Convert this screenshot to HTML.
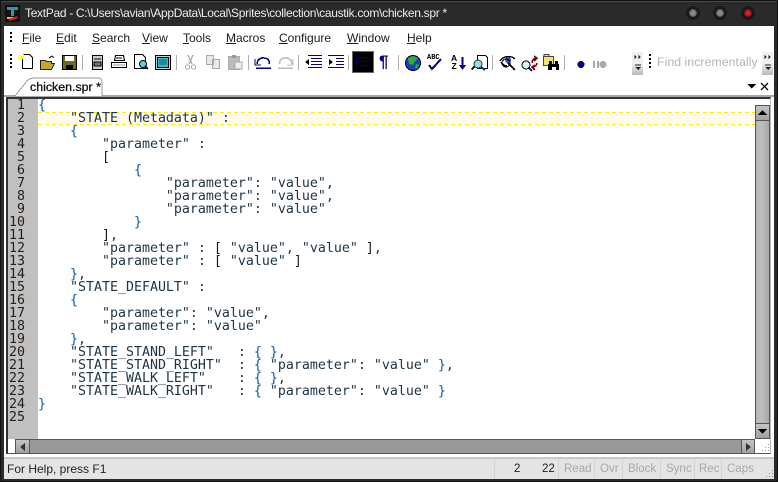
<!DOCTYPE html>
<html><head><meta charset="utf-8"><style>
*{box-sizing:border-box}
html,body{margin:0;padding:0;width:778px;height:482px;overflow:hidden;background:#2a2a2a}
.a{position:absolute}
#ui{position:absolute;left:0;top:0;width:778px;height:482px;font-family:"Liberation Sans",sans-serif}
.m{position:absolute;top:31px;font-size:12px;line-height:14px;color:#1a1a1a;white-space:pre}
.m u{text-decoration:underline}
.ln{position:absolute;left:8px;width:17px;text-align:right;font:13.3px/13px "DejaVu Sans Mono",monospace;color:#2a2018}
pre{position:absolute;margin:0;left:38px;top:99px;font:13.29px/13px "DejaVu Sans Mono",monospace;color:#1c3444;white-space:pre}
pre b{font-weight:normal;color:#0a5aa8}
pre i{font-style:normal;color:#1a1a1a}
.s{position:absolute;top:462px;font-size:11.5px;line-height:14px;color:#a8a8a8;white-space:pre}
.sep{position:absolute;width:1px;top:459px;height:20px;background:#d4d4d4}
.tb{position:absolute;width:1px;top:55px;height:15px;background:#b0b0b0}
.grip{position:absolute;width:2px;height:2px;background:#000}
svg{position:absolute;overflow:visible;shape-rendering:crispEdges}
.btn{position:absolute;background:linear-gradient(#c4c4c4,#a0a0a0);border:1px solid #555}
.dash{position:absolute;left:38px;width:717px;height:1px;background:repeating-linear-gradient(90deg,#ffee00 0 4px,#fff 4px 7px)}
</style></head><body><div id="ui">
<div class="a" style="left:0;top:0;width:778px;height:482px;background:#2a2a2a;border:1px solid #111"></div>
<div class="a" style="left:1px;top:1px;width:776px;height:1px;background:#4a4a4a"></div>

<svg style="left:5px;top:5px" width="16" height="18"><rect x="0" y="0" width="15" height="17" fill="#111"/><path d="M2 2h11v3h-4v6H6V5H2z" fill="#1b9bc4"/><path d="M2 12h9v2H2z" fill="#e8c040"/><path d="M3 14l9-3 1 2-8 3z" fill="#d02020"/></svg>
<div class="a" style="left:25px;top:6px;font-size:12px;letter-spacing:-.31px;line-height:14px;color:#ececec;white-space:pre">TextPad - C:\Users\avian\AppData\Local\Sprites\collection\caustik.com\chicken.spr *</div>

<svg style="left:684px;top:5px" width="82" height="16" shape-rendering="geometricPrecision">
<defs><radialGradient id="g"><stop offset="0" stop-color="#999"/><stop offset=".7" stop-color="#777"/><stop offset="1" stop-color="#4a4a4a"/></radialGradient><radialGradient id="r"><stop offset="0" stop-color="#e83030"/><stop offset=".7" stop-color="#b01818"/><stop offset="1" stop-color="#601010"/></radialGradient></defs>
<circle cx="9" cy="8" r="7" fill="#1a1a1a"/><circle cx="9" cy="8" r="4" fill="url(#g)"/>
<circle cx="36" cy="8" r="7" fill="#1a1a1a"/><circle cx="36" cy="8" r="4" fill="url(#g)"/>
<circle cx="64" cy="8" r="7" fill="#1a1a1a"/><circle cx="64" cy="8" r="4" fill="url(#r)"/>
</svg>

<div class="a" style="left:4px;top:26px;width:770px;height:70px;background:#fff"></div>
<div class="a" style="left:4px;top:95px;width:770px;height:2px;background:#a8a8a8"></div>

<div class="grip" style="left:10px;top:32px"></div><div class="grip" style="left:10px;top:36px"></div><div class="grip" style="left:10px;top:40px"></div>
<div class="m" style="left:22px"><u>F</u>ile</div>
<div class="m" style="left:56px"><u>E</u>dit</div>
<div class="m" style="left:92px"><u>S</u>earch</div>
<div class="m" style="left:142px"><u>V</u>iew</div>
<div class="m" style="left:183px"><u>T</u>ools</div>
<div class="m" style="left:226px"><u>M</u>acros</div>
<div class="m" style="left:279px"><u>C</u>onfigure</div>
<div class="m" style="left:347px"><u>W</u>indow</div>
<div class="m" style="left:407px"><u>H</u>elp</div>

<div class="grip" style="left:10px;top:54px"></div><div class="grip" style="left:10px;top:58px"></div><div class="grip" style="left:10px;top:62px"></div><div class="grip" style="left:10px;top:66px"></div>

<!-- new -->
<svg style="left:18px;top:54px" width="16" height="16"><path d="M5.500.5h6l3 3v11h-10v-11" fill="#fff" stroke="#000"/><rect x="0" y="1" width="5" height="4" fill="#ffff40"/></svg>
<!-- open -->
<svg style="left:40px;top:55px" width="16" height="15"><path d="M.500 5.500h5l1 1h5v2h3l-3 6h-11z" fill="#c0a830" stroke="#222"/><path d="M9 3l3-2 2 2" fill="none" stroke="#222"/></svg>
<!-- save -->
<svg style="left:62px;top:55px" width="15" height="15"><rect x=".5" y=".5" width="14" height="14" fill="#6a6a20" stroke="#000"/><rect x="3" y="1" width="9" height="5" fill="#fff"/><rect x="4" y="10" width="7" height="5" fill="#000"/></svg>
<div class="tb" style="left:82px"></div>
<!-- manage -->
<svg style="left:91px;top:55px" width="13" height="15"><rect x="1.500" y=".5" width="10" height="14" fill="#ccc" stroke="#000"/><path d="M3 4h7M3 7h7v4H3z" fill="#777" stroke="#000"/></svg>
<!-- print -->
<svg style="left:111px;top:55px" width="16" height="15"><path d="M4.500.5h8l1 5h-10zM.500 7.500h15v5h-15z" fill="#fff" stroke="#000"/><rect x="2" y="9" width="12" height="2" fill="#ccc"/><path d="M5 3h6" stroke="#000"/></svg>
<!-- preview -->
<svg style="left:134px;top:54px" width="16" height="16"><path d="M.5.500h8l3 3v11h-11z" fill="#fff" stroke="#000"/><circle cx="9" cy="10" r="3.500" fill="#60d0e0" stroke="#000" shape-rendering="geometricPrecision"/><path d="M11 12l3 3" stroke="#000" stroke-width="2"/></svg>
<!-- doc props -->
<svg style="left:155px;top:55px" width="16" height="15"><rect x=".5" y=".5" width="15" height="14" fill="#ccc" stroke="#000"/><rect x="2" y="2" width="12" height="11" fill="#000"/><rect x="3" y="3" width="10" height="9" fill="#30c0c8"/><path d="M4 5h8M4 7h8M4 9h8" stroke="#0a5a70"/></svg>
<div class="tb" style="left:176px"></div>
<!-- cut -->
<svg style="left:185px;top:55px" width="11" height="15" shape-rendering="geometricPrecision"><path d="M3 0l4 9M8 0L4 9" stroke="#aaa" fill="none" stroke-width="1.300"/><circle cx="2.500" cy="12" r="2.200" fill="none" stroke="#aaa"/><circle cx="8.500" cy="12" r="2.200" fill="none" stroke="#aaa"/></svg>
<!-- copy -->
<svg style="left:206px;top:55px" width="15" height="14"><path d="M.5.500h7v9h-7zM6.500 4.500h7v9h-7z" fill="#e8e8e8" stroke="#aaa"/></svg>
<!-- paste -->
<svg style="left:228px;top:55px" width="15" height="15"><rect x=".5" y="1.500" width="11" height="13" fill="#bbb" stroke="#aaa"/><rect x="4" y="0" width="4" height="3" fill="#999"/><rect x="7" y="7" width="7" height="7" fill="#eee" stroke="#aaa"/></svg>
<div class="tb" style="left:248px"></div>
<!-- undo -->
<svg style="left:255px;top:55px" width="17" height="15" shape-rendering="geometricPrecision"><path d="M2 9a6 6 0 0 1 7-6c4 0 6 3 5 6" fill="none" stroke="#000080" stroke-width="1.500"/><path d="M0 4v6h6" fill="none" stroke="#000080"/><path d="M1 13h15" stroke="#000080" stroke-width="1.500"/></svg>
<!-- redo -->
<svg style="left:277px;top:55px" width="17" height="15" shape-rendering="geometricPrecision"><path d="M15 9a6 6 0 0 0-7-6c-4 0-6 3-5 6" fill="none" stroke="#bbb" stroke-width="1.500"/><path d="M16 4v6h-6" fill="none" stroke="#bbb"/><path d="M1 13h15" stroke="#bbb" stroke-width="1.500"/></svg>
<div class="tb" style="left:298px"></div>
<!-- indent -->
<svg style="left:305px;top:55px" width="17" height="14"><path d="M3 .5h14M6 3.500h11M6 6.500h11M6 9.500h11M3 12.500h14" stroke="#000080"/><path d="M0 7l4-3v6z" fill="#000"/></svg>
<svg style="left:328px;top:55px" width="16" height="14"><path d="M0 .5h16M8 3.500h8M8 6.500h8M8 9.500h8M0 12.500h16" stroke="#000080"/><path d="M5 7L1 4v6z" fill="#000"/></svg>
<div class="tb" style="left:348px"></div>
<!-- wrap toggled -->
<div class="a" style="left:352px;top:51px;width:22px;height:22px;background:#000;border:1px solid #666"></div>
<svg style="left:356px;top:56px" width="14" height="12"><path d="M2 1.500h10M1 5.500h4M7 5.500h6M2 9.500h10" stroke="#000080" stroke-width="1"/><path d="M.5 2v3M13.500 2v3M.5 6v3" stroke="#000080"/></svg>
<div class="a" style="left:379px;top:53px;font:bold 17px/18px 'Liberation Sans',sans-serif;color:#000080">¶</div>
<div class="tb" style="left:398px"></div>
<!-- globe -->
<svg style="left:405px;top:55px" width="16" height="16" shape-rendering="geometricPrecision"><circle cx="8" cy="8" r="7.500" fill="#1840c0" stroke="#103"/><path d="M3 3l5-2 5 2-3 3-2 4-4-1zM11 9l3 1-2 4-2-1z" fill="#30b030"/></svg>
<!-- spell -->
<svg style="left:427px;top:55px" width="15" height="15" shape-rendering="geometricPrecision"><path d="M2 10l3 4 9-10" fill="none" stroke="#000080" stroke-width="2"/></svg>
<div class="a" style="left:427px;top:54px;font:bold 7px/8px 'Liberation Mono',monospace;color:#000">ABC</div>
<!-- sort -->
<div class="a" style="left:451px;top:54px;font:bold 8.5px/8px 'Liberation Sans',sans-serif;color:#000;text-align:center">A<br>Z</div>
<svg style="left:459px;top:57px" width="7" height="13"><path d="M3.500 0v9" stroke="#000080" stroke-width="2"/><path d="M0 8h7l-3.500 5z" fill="#000080"/></svg>
<!-- find in files-like -->
<svg style="left:471px;top:55px" width="17" height="16"><path d="M6.500.5h8l2 2v11h-10z" fill="#fff" stroke="#000"/><circle cx="7" cy="9" r="4" fill="#90e0e8" stroke="#333" shape-rendering="geometricPrecision"/><path d="M.5 14.500l3-3" stroke="#000" stroke-width="2"/><path d="M10 12l4 3" stroke="#1030a0" stroke-width="2"/></svg>
<div class="tb" style="left:492px"></div>
<!-- eye -->
<svg style="left:499px;top:54px" width="18" height="18" shape-rendering="geometricPrecision"><path d="M1 7c3-5 11-6 15-2" fill="none" stroke="#000" stroke-width="1.400"/><circle cx="9" cy="6" r="3" fill="#3050c0"/><path d="M2 8c2 3 4 4 6 4M9 9l7 7" fill="none" stroke="#000" stroke-width="1.500"/><circle cx="7" cy="9" r="4" fill="none" stroke="#000"/></svg>
<!-- replace -->
<svg style="left:521px;top:56px" width="18" height="15" shape-rendering="geometricPrecision"><circle cx="5" cy="9" r="4" fill="#d8f4f8" stroke="#000"/><path d="M8 12l3 3" stroke="#000080" stroke-width="2"/><path d="M11 7c0-3 2-5 4-5M13 0l3 2-3 3M16 7c0 2-2 4-4 4M14 9l-3 2 3 3" fill="none" stroke="#800000" stroke-width="1.500"/></svg>
<!-- find files -->
<svg style="left:543px;top:54px" width="17" height="17"><rect x=".5" y="2.500" width="10" height="9" fill="#f0e860" stroke="#444"/><rect x="1" y=".5" width="5" height="2" fill="#f0e860" stroke="#444"/><path d="M5 10h11v6h-3v-3h-4v3H5z" fill="#000"/><rect x="6" y="7" width="3" height="4" fill="#000"/><rect x="12" y="7" width="3" height="4" fill="#000"/></svg>
<div class="tb" style="left:564px"></div>
<svg style="left:577px;top:60px" width="30" height="9" shape-rendering="geometricPrecision"><circle cx="4" cy="4.500" r="3.500" fill="#000080"/><path d="M16 1h2v7h-2zM20 1h2v7h-2z" fill="#aaa"/><circle cx="26" cy="4.500" r="3.500" fill="#aaa"/></svg>

<div class="a" style="left:632px;top:52px;width:11px;height:23px;background:linear-gradient(#f0f0f0 50%,#b8b8b8)"></div>
<svg style="left:634px;top:55px" width="8" height="17"><path d="M.5 0v4l2-2zM4.500 0v4l2-2z" fill="#222"/><path d="M1 10h6" stroke="#222"/><path d="M1 12h6l-3 3z" fill="#222"/></svg>
<div class="grip" style="left:649px;top:54px"></div><div class="grip" style="left:649px;top:58px"></div><div class="grip" style="left:649px;top:62px"></div><div class="grip" style="left:649px;top:66px"></div>
<div class="a" style="left:657px;top:55px;font-size:12.4px;line-height:14px;color:#b4b4b8;white-space:pre">Find incrementally</div>
<div class="a" style="left:762px;top:52px;width:11px;height:23px;background:linear-gradient(#f0f0f0 50%,#b8b8b8)"></div>
<svg style="left:764px;top:55px" width="8" height="17"><path d="M.5 0v4l2-2zM4.500 0v4l2-2z" fill="#222"/><path d="M1 10h6" stroke="#222"/><path d="M1 12h6l-3 3z" fill="#222"/></svg>

<!-- tab -->
<svg style="left:4px;top:66px" width="110" height="31" shape-rendering="geometricPrecision"><path d="M11 30L23 15Q26 12 30 12H94Q98 12 98 16V30" fill="#fff" stroke="#999"/></svg>
<div class="a" style="left:30px;top:80px;font-size:12.4px;line-height:14px;color:#111;white-space:pre;-webkit-text-stroke:.3px #111">chicken.spr *</div>
<svg style="left:747px;top:82px" width="24" height="10"><path d="M0 2h9L4.500 6.500z" fill="#000"/><path d="M14 1l7 7M21 1l-7 7" stroke="#000" stroke-width="1.300" shape-rendering="geometricPrecision"/></svg>

<!-- editor -->
<div class="a" style="left:4px;top:97px;width:770px;height:360px;background:#fff"></div>
<div class="a" style="left:6px;top:97px;width:765px;height:357px;border:2px solid #333;border-right:1px solid #bbb;border-bottom:1px solid #555;background:#fff"></div>
<div class="a" style="left:8px;top:99px;width:30px;height:340px;background:#c0c0c0"></div>
<div class="a" style="left:38px;top:112px;width:717px;height:13px;background:#fff9ee"></div>
<div class="dash" style="top:112px"></div>
<div class="dash" style="top:124px"></div>
<div class="ln" style="top:99px">1</div><div class="ln" style="top:112px">2</div><div class="ln" style="top:125px">3</div><div class="ln" style="top:138px">4</div><div class="ln" style="top:151px">5</div><div class="ln" style="top:164px">6</div><div class="ln" style="top:177px">7</div><div class="ln" style="top:190px">8</div><div class="ln" style="top:203px">9</div><div class="ln" style="top:216px">10</div><div class="ln" style="top:229px">11</div><div class="ln" style="top:242px">12</div><div class="ln" style="top:255px">13</div><div class="ln" style="top:268px">14</div><div class="ln" style="top:281px">15</div><div class="ln" style="top:294px">16</div><div class="ln" style="top:307px">17</div><div class="ln" style="top:320px">18</div><div class="ln" style="top:333px">19</div><div class="ln" style="top:346px">20</div><div class="ln" style="top:359px">21</div><div class="ln" style="top:372px">22</div><div class="ln" style="top:385px">23</div><div class="ln" style="top:398px">24</div><div class="ln" style="top:411px">25</div>
<pre><b>{</b>
    "STATE (Metadata)" :
    <b>{</b>
        "parameter" :
        <i>[</i>
            <b>{</b>
                "parameter": "value",
                "parameter": "value",
                "parameter": "value"
            <b>}</b>
        <i>]</i>,
        "parameter" : <i>[</i> "value", "value" <i>]</i>,
        "parameter" : <i>[</i> "value" <i>]</i>
    <b>}</b>,
    "STATE_DEFAULT" :
    <b>{</b>
        "parameter": "value",
        "parameter": "value"
    <b>}</b>,
    "STATE_STAND_LEFT"   : <b>{</b> <b>}</b>,
    "STATE_STAND_RIGHT"  : <b>{</b> "parameter": "value" <b>}</b>,
    "STATE_WALK_LEFT"    : <b>{</b> <b>}</b>,
    "STATE_WALK_RIGHT"   : <b>{</b> "parameter": "value" <b>}</b>
<b>}</b></pre>

<!-- vertical scrollbar -->
<div class="a" style="left:755px;top:105px;width:15px;height:333px;background:#999;border:1px solid #555"></div>
<div class="btn" style="left:755px;top:105px;width:15px;height:16px"></div>
<svg style="left:758px;top:110px" width="9" height="5"><path d="M0 5h9L4.500 0z" fill="#000"/></svg>
<div class="a" style="left:755px;top:120px;width:15px;height:304px;background:linear-gradient(90deg,#b4b4b4,#c0c0c0 40%,#a8a8a8);border:1px solid #555"></div>
<div class="btn" style="left:755px;top:423px;width:15px;height:16px"></div>
<svg style="left:758px;top:429px" width="9" height="5"><path d="M0 0h9L4.500 5z" fill="#000"/></svg>
<!-- horizontal -->
<div class="a" style="left:15px;top:439px;width:740px;height:15px;background:#999;border:1px solid #555"></div>
<div class="btn" style="left:15px;top:439px;width:15px;height:15px"></div>
<svg style="left:20px;top:443px" width="5" height="8"><path d="M5 0v8L0 4z" fill="#333"/></svg>
<div class="btn" style="left:741px;top:439px;width:14px;height:15px"></div>
<svg style="left:746px;top:443px" width="5" height="8"><path d="M0 0v8l5-4z" fill="#333"/></svg>
<svg style="left:760px;top:444px" width="10" height="9"><path d="M8 0h1v1H8zM5 3h1v1H5zM8 3h1v1H8zM2 6h1v1H2zM5 6h1v1H5zM8 6h1v1H8z" fill="#999"/></svg>

<!-- status -->
<div class="a" style="left:4px;top:457px;width:770px;height:2px;background:#c8c8c8"></div>
<div class="a" style="left:4px;top:459px;width:770px;height:20px;background:#e4e4e4"></div>
<div class="a" style="left:7px;top:462px;font-size:12px;line-height:14px;color:#222;white-space:pre">For Help, press F1</div>
<div class="sep" style="left:494px"></div><div class="sep" style="left:558px"></div><div class="sep" style="left:594px"></div><div class="sep" style="left:622px"></div><div class="sep" style="left:660px"></div><div class="sep" style="left:694px"></div><div class="sep" style="left:721px"></div>
<div class="s" style="left:514px;color:#222">2</div>
<div class="s" style="left:542px;color:#222">22</div>
<div class="s" style="left:564px">Read</div>
<div class="s" style="left:600px">Ovr</div>
<div class="s" style="left:628px">Block</div>
<div class="s" style="left:666px">Sync</div>
<div class="s" style="left:699px">Rec</div>
<div class="s" style="left:727px">Caps</div>
<svg style="left:764px;top:470px" width="10" height="9"><path d="M8 0h1v1H8zM5 3h1v1H5zM8 3h1v1H8zM2 6h1v1H2zM5 6h1v1H5zM8 6h1v1H8z" fill="#888"/></svg>
</div></body></html>
